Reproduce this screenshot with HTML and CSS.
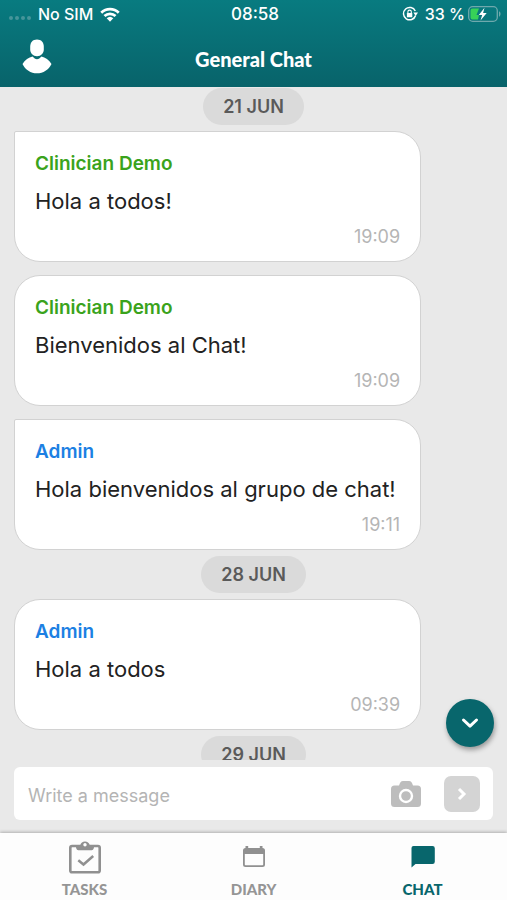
FILE: index.html
```html
<!DOCTYPE html>
<html lang="en">
<head>
<meta charset="utf-8">
<meta name="viewport" content="width=device-width, initial-scale=1">
<title>General Chat</title>
<link rel="stylesheet" href="styles.css">
</head>
<body>
<div class="app">
  <header class="header">
    <div class="status">
      <div class="status-side">
        <span class="signal"><i></i><i></i><i></i><i></i></span>
        <span>No SIM</span>
        <svg class="wifi" viewBox="0 0 20 15" width="20" height="15" aria-hidden="true">
          <path d="M0.3 4.7a14 14 0 0 1 19.4 0l-1.9 2a11.3 11.3 0 0 0-15.6 0z"/>
          <path d="M3.5 8a9.4 9.4 0 0 1 13 0l-1.9 2a6.7 6.7 0 0 0-9.2 0z"/>
          <path d="M6.7 11.3a4.8 4.8 0 0 1 6.6 0L10 14.7z"/>
        </svg>
      </div>
      <span class="clock">08:58</span>
      <div class="status-side status-right">
        <svg class="lock" viewBox="0 0 16 16" width="16" height="16" aria-hidden="true">
          <path d="M13.600 9.500A6.200 6.200 0 1 1 13.300 5" fill="none" stroke="#fff" stroke-width="1.500"/>
          <path d="M11.400 6.500H16l-2.300 3.600z"/>
          <rect x="4.900" y="7" width="5.400" height="4.300" rx=".6"/>
          <path d="M5.900 7.300V5.800a1.700 1.700 0 0 1 3.400 0v1.500" fill="none" stroke="#fff" stroke-width="1.100"/>
        </svg>
        <span>33 %</span>
        <svg class="battery" viewBox="0 0 33 16" width="33" height="16" aria-hidden="true">
          <rect x=".7" y=".7" width="28.600" height="14.600" rx="4" fill="none" stroke="#6fa9ad" stroke-width="1.300"/>
          <path d="M31 5.300c2 .8 2 4.600 0 5.400z" fill="#6fa9ad"/>
          <path d="M4.500 2.500H11L8.500 9H11l-1 4.500H4.500a2 2 0 0 1-2-2v-7a2 2 0 0 1 2-2z" fill="#37d158"/>
          <path d="M16.500 1.800 10.800 9h3.400l-1.700 5.400L18.700 7h-3.600z"/>
        </svg>
      </div>
    </div>
    <div class="titlebar">
      <button class="profile" type="button" aria-label="Profile">
        <svg viewBox="0 0 30 35" width="30" height="35" aria-hidden="true">
          <path d="M15 .5c4.300 0 6.800 2.800 6.800 7.200v2.600c0 4-2.800 7-6.800 7s-6.800-3-6.800-7V7.700C8.200 3.300 10.700.5 15 .5z"/>
          <path d="M10.500 17.600c1.500 1.700 2.900 2.600 4.500 2.600s3-.9 4.500-2.600c3.600.7 7.700 3.500 10 7.300-2.700 5.800-8.300 9.400-14.500 9.400S3.200 30.700.5 24.900c2.300-3.800 6.400-6.600 10-7.300z"/>
        </svg>
      </button>
      <h1>General Chat</h1>
    </div>
  </header>

  <main class="messages">
    <div class="date">21 JUN</div>
    <article class="bubble first">
      <h2 class="clinician">Clinician Demo</h2>
      <p>Hola a todos!</p>
      <time>19:09</time>
    </article>
    <article class="bubble">
      <h2 class="clinician">Clinician Demo</h2>
      <p>Bienvenidos al Chat!</p>
      <time>19:09</time>
    </article>
    <article class="bubble first">
      <h2 class="admin">Admin</h2>
      <p>Hola bienvenidos al grupo de chat!</p>
      <time>19:11</time>
    </article>
    <div class="date">28 JUN</div>
    <article class="bubble">
      <h2 class="admin">Admin</h2>
      <p>Hola a todos</p>
      <time>09:39</time>
    </article>
    <div class="date">29 JUN</div>
  </main>

  <form class="composer">
    <button class="scroll-down" type="button" aria-label="Scroll to latest">
      <svg viewBox="0 0 18 12" width="18" height="12" aria-hidden="true"><path d="M2.500 3 9 9.200 15.500 3"/></svg>
    </button>
    <div class="field">
      <input type="text" placeholder="Write a message" aria-label="Write a message">
      <button class="camera" type="button" aria-label="Add photo">
        <svg viewBox="0 0 30 26" width="30" height="26" aria-hidden="true">
          <path d="M3.500 4.500H8L9 2q.8-2 2.800-2h6.400Q20.200 0 21 2l1 2.500h4.500Q30 4.500 30 8v14.500q0 3.500-3.500 3.500h-23Q0 26 0 22.500V8q0-3.500 3.500-3.500z" fill="#bdbdbd"/>
          <circle cx="15" cy="15" r="6" fill="none" stroke="#fff" stroke-width="2.400"/>
        </svg>
      </button>
      <button class="send" type="submit" aria-label="Send">
        <svg viewBox="0 0 10 14" width="10" height="14" aria-hidden="true"><path d="M2 2 7 7l-5 5"/></svg>
      </button>
    </div>
  </form>

  <nav class="tabs">
    <a href="#tasks">
      <svg viewBox="0 0 32 34" width="32" height="34" aria-hidden="true">
        <rect x="1.300" y="6" width="29.400" height="26.300" rx="1.800" fill="none" stroke="#909090" stroke-width="2.600"/>
        <path d="M6.500 5h4.800a4.900 4.900 0 0 1 9.400 0h4.800l-.8 3.500q-.4 1.700-2 1.700H9.300q-1.600 0-2-1.700z" fill="#909090"/>
        <circle cx="16" cy="4.700" r="1.700" fill="#fff"/>
        <path d="m9.300 20.300 5.200 4.200 9.700-8.500" fill="none" stroke="#909090" stroke-width="2.500"/>
      </svg>
      <span>TASKS</span>
    </a>
    <a href="#diary">
      <svg viewBox="0 0 24 34" width="24" height="34" aria-hidden="true">
        <path d="M3.500 8V6h2.700v2h11.600V6h2.700v2q2.500 0 2.500 2.500v14q0 2.500-2.500 2.500h-17Q1 27 1 24.500v-14q0-2.500 2.500-2.500zM2.800 14v10.400q0 .8.800.8h16.800q.8 0 .8-.8V14z" fill="#909090" fill-rule="evenodd"/>
      </svg>
      <span>DIARY</span>
    </a>
    <a class="active" href="#chat" aria-current="page">
      <svg viewBox="0 0 24 34" width="24" height="34" aria-hidden="true">
        <path d="M2.500 6h19q2.300 0 2.300 2.300v13.400q0 2.300-2.300 2.300H4.500L.5 27.500V8q0-2 2-2z" fill="#08666c"/>
      </svg>
      <span>CHAT</span>
    </a>
  </nav>
</div>
</body>
</html>
```
FILE: styles.css
```css
* { box-sizing: border-box; }
body {
  margin: 0;
  background: #e9e9e9;
  font-family: Inter, "Liberation Sans", sans-serif;
}
h1, h2, p { margin: 0; }
button { border: 0; padding: 0; display: flex; align-items: center; justify-content: center; }
svg { display: block; flex: none; }

.app { height: 100vh; display: flex; flex-direction: column; }

.header {
  flex: none;
  color: #fff;
  background: linear-gradient(#087b80, #08636a);
}
.header svg { fill: #fff; }
.status {
  display: grid;
  grid-template-columns: 1fr auto 1fr;
  align-items: center;
  height: 28px;
  padding: 0 6px 0 9px;
  font-size: 16px;
  font-weight: 500;
}
.status-side { display: flex; align-items: center; gap: 7px; }
.status-right { justify-content: flex-end; }
.status-right .battery { margin-left: -4px; }
.signal { display: flex; gap: 2px; padding-top: 8px; }
.signal i { width: 4px; height: 4px; border-radius: 50%; background: #46959a; }
.clock { font-size: 17px; }

.titlebar {
  display: grid;
  grid-template-columns: 1fr auto 1fr;
  align-items: center;
  height: 59px;
  padding: 0 22px 2px;
}
.profile { width: 30px; background: none; }
.titlebar h1 { font: 900 20px/24px Lato, sans-serif; padding-top: 4px; }

.messages {
  flex: 1;
  min-height: 0;
  overflow: hidden;
  display: flex;
  flex-direction: column;
  gap: 6px;
  padding: 1px 14px 0;
}
.messages > * { flex: none; }
.date {
  align-self: center;
  padding: 0 20px;
  border-radius: 19px;
  background: #dadada;
  color: #5a5a5a;
  font-size: 18px;
  font-weight: 600;
  line-height: 37px;
}
.bubble {
  display: flex;
  flex-direction: column;
  width: 85%;
  padding: 18px 20px 12px;
  border: 1px solid #d2d2d2;
  border-radius: 26px;
  background: #fff;
}
.bubble.first { border-top-left-radius: 2px; }
.bubble + .bubble { margin-top: 7px; }
.bubble h2 { font-size: 19px; font-weight: 600; line-height: 28px; }
.bubble p { font-size: 22px; line-height: 46px; color: #222; white-space: nowrap; }
.bubble time { align-self: flex-end; font-size: 18px; line-height: 25px; color: #b5b5b5; }
.clinician { color: #3aa31c; }
.admin { color: #1c80e3; }

.composer { flex: none; position: relative; padding: 7px 14px 13px; }
.field {
  display: flex;
  align-items: center;
  height: 53px;
  padding: 0 13px 0 14px;
  border-radius: 6px;
  background: #fff;
}
.field input {
  flex: 1;
  min-width: 0;
  padding: 4px 0 0;
  border: 0;
  outline: 0;
  background: none;
  font: 400 18px/24px Inter, sans-serif;
}
.field input::placeholder { color: #b4b4b4; opacity: 1; }
.camera { background: none; margin-right: 23px; }
.send { width: 36px; height: 36px; border-radius: 7px; background: #d4d4d4; }
.send path, .scroll-down path { fill: none; stroke: #fff; stroke-width: 3; }
.scroll-down {
  position: absolute;
  right: 13px;
  bottom: 86px;
  width: 48px;
  height: 48px;
  border-radius: 50%;
  background: #08666c;
  box-shadow: 1px 3px 5px rgba(0, 0, 0, .35);
}
.scroll-down path { stroke-linecap: round; stroke-linejoin: round; }

.tabs {
  flex: none;
  display: grid;
  grid-template-columns: repeat(3, 1fr);
  height: 67px;
  padding-top: 7px;
  background: #fdfdfd;
  box-shadow: 0 -1px 3px rgba(0, 0, 0, .25);
}
.tabs a {
  display: flex;
  flex-direction: column;
  align-items: center;
  gap: 6px;
  color: #959595;
  font: 900 15px/18px Lato, sans-serif;
  text-decoration: none;
}
.tabs .active { color: #08666c; }
```
